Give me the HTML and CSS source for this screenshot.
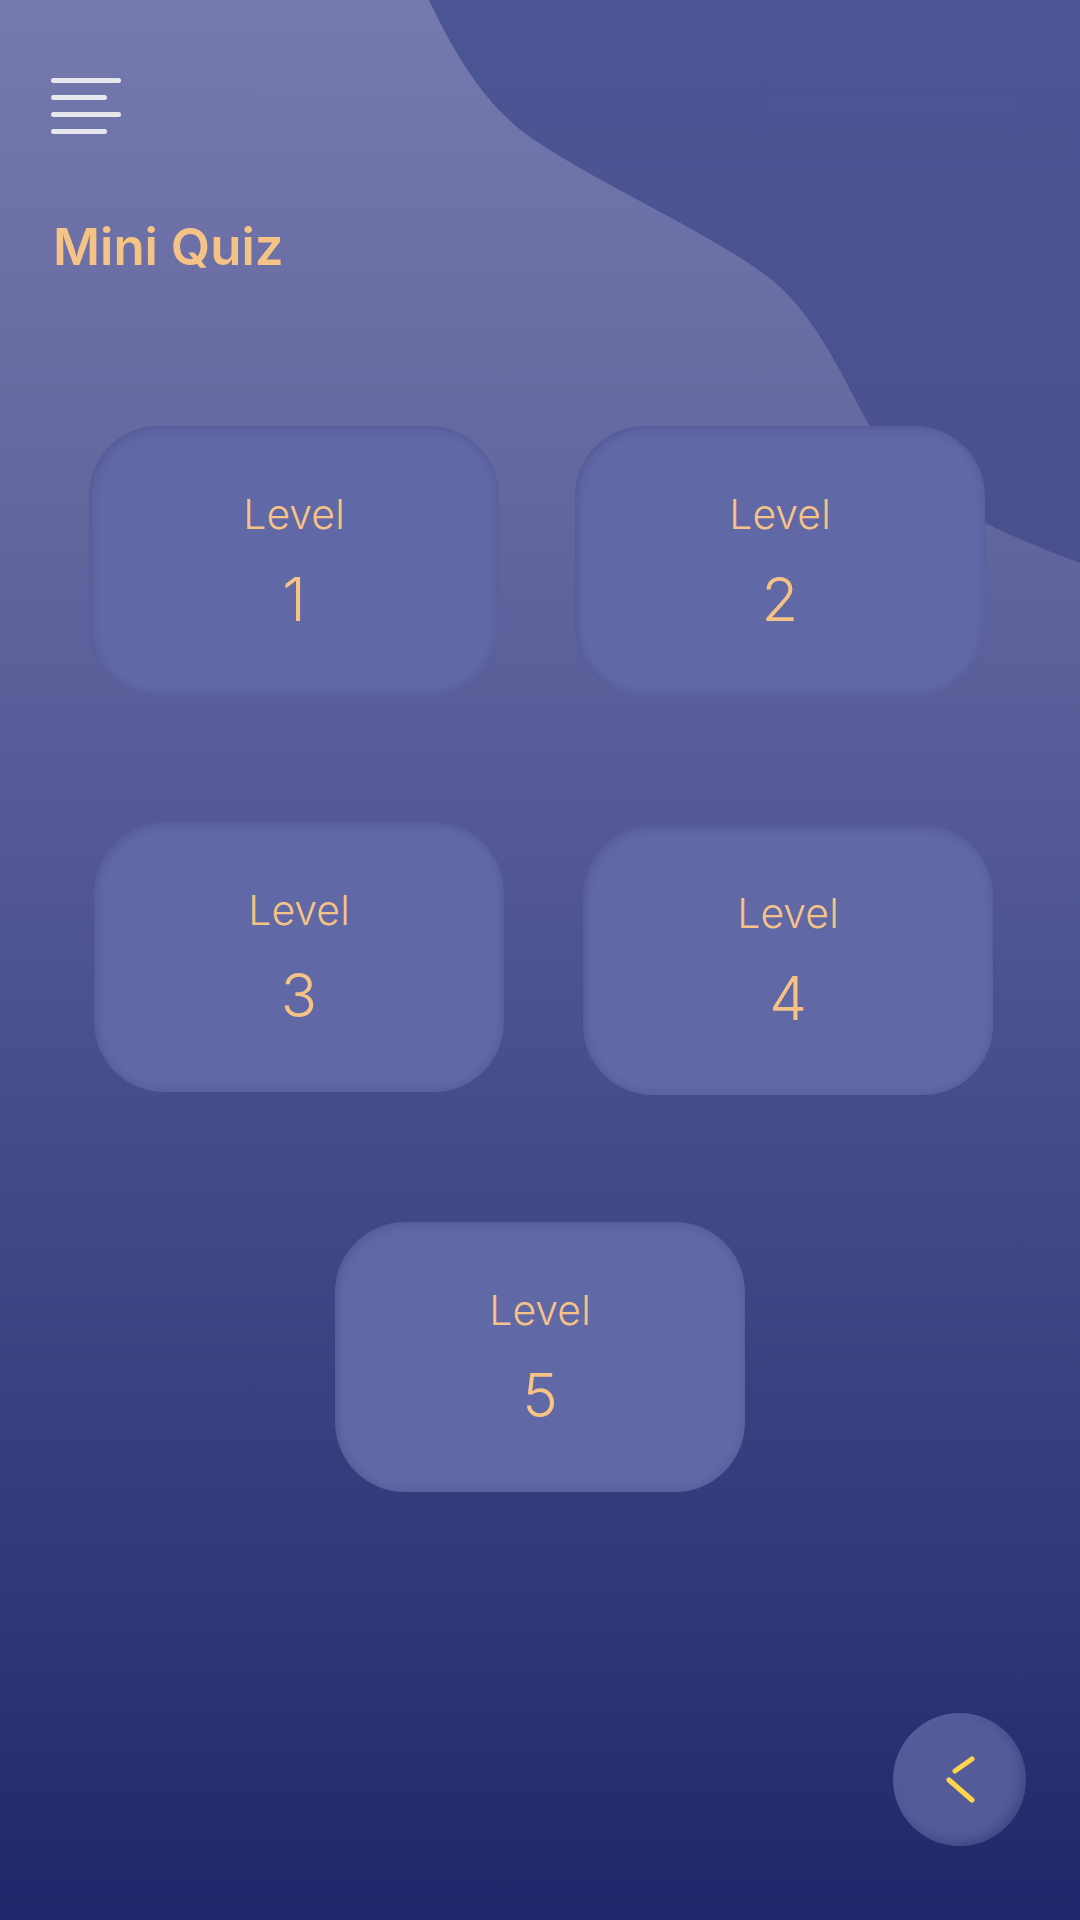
FILE: index.html
```html
<!DOCTYPE html>
<html lang="en">
<head>
<meta charset="utf-8">
<title>Mini Quiz</title>
<link rel="stylesheet" href="styles.css">
</head>
<body>
<div class="screen">
  <svg class="blob" width="1080" height="600" viewBox="0 0 1080 600" aria-hidden="true">
    <defs>
      <linearGradient id="blobFill" x1="0" y1="0" x2="0" y2="1">
        <stop offset="0" stop-color="#4c5594"/>
        <stop offset="1" stop-color="#4a508d"/>
      </linearGradient>
    </defs>
    <path d="M429 0 C455 55 485 105 530 137 C600 185 715 235 772 280 C822 322 845 385 875 435 C905 480 950 506 985 523 C1020 540 1050 552 1080 563 L1080 0 Z" fill="url(#blobFill)"/>
  </svg>

  <div class="menu" aria-label="Menu">
    <span class="menu-line"></span>
    <span class="menu-line menu-line-short"></span>
    <span class="menu-line"></span>
    <span class="menu-line menu-line-short"></span>
  </div>

  <h1 class="title">Mini Quiz</h1>

  <div class="levels">
    <div class="row row-1">
      <div class="card"><span class="card-label">Level</span><span class="card-num">1</span></div>
      <div class="card"><span class="card-label">Level</span><span class="card-num">2</span></div>
    </div>
    <div class="row row-2">
      <div class="card"><span class="card-label">Level</span><span class="card-num">3</span></div>
      <div class="card card-low"><span class="card-label">Level</span><span class="card-num">4</span></div>
    </div>
    <div class="row row-3">
      <div class="card"><span class="card-label">Level</span><span class="card-num">5</span></div>
    </div>
  </div>

  <button class="back" aria-label="Back">
    <svg width="133" height="133" viewBox="0 0 133 133">
      <line x1="62" y1="58" x2="79" y2="46" class="chev"/>
      <line x1="56" y1="67" x2="79" y2="87" class="chev"/>
    </svg>
  </button>
</div>
</body>
</html>
```

FILE: styles.css
```css
* {
  box-sizing: border-box;
}

html, body {
  margin: 0;
  padding: 0;
}

body {
  font-family: "Inter", "Noto Sans", "Liberation Sans", sans-serif;
  background: #21266a;
}

.screen {
  position: relative;
  width: 1080px;
  height: 1920px;
  overflow: hidden;
  background: linear-gradient(180deg,
    #7479ae 0%,
    #63679f 26%,
    #555a97 41.7%,
    #474c8b 57.3%,
    #363c7b 78%,
    #21266a 100%);
  display: flex;
  flex-direction: column;
}

.blob {
  position: absolute;
  top: 0;
  left: 0;
  display: block;
}

.menu {
  position: relative;
  margin: 78px 0 0 51px;
  display: flex;
  flex-direction: column;
  gap: 12px;
}

.menu-line {
  display: block;
  width: 70px;
  height: 5px;
  border-radius: 3px;
  background: #e7e7ee;
}

.menu-line-short {
  width: 56px;
}

.title {
  position: relative;
  margin: 87px 0 0 53px;
  font-size: 51px;
  line-height: 51px;
  font-weight: 600;
  color: #f6c386;
  letter-spacing: 0;
}

.levels {
  position: relative;
  margin-top: 154px;
  display: flex;
  flex-direction: column;
}

.row {
  display: flex;
  align-items: flex-start;
}

.row-1 {
  padding-left: 89px;
  gap: 76px;
}

.row-2 {
  margin-top: 126px;
  padding-left: 94px;
  gap: 79px;
}

.row-3 {
  margin-top: 127px;
  padding-left: 335px;
}

.card {
  width: 410px;
  height: 270px;
  border-radius: 70px;
  background: #6168a6;
  box-shadow:
    inset 3px 3px 9px rgba(60, 63, 120, 0.28),
    inset -2px -2px 7px rgba(60, 63, 120, 0.16);
  display: flex;
  flex-direction: column;
  align-items: center;
  padding-top: 68px;
  color: #f6c386;
}

.card-low {
  margin-top: 3px;
}

.card-label {
  font-size: 41px;
  line-height: 41px;
  font-weight: 300;
}

.card-num {
  margin-top: 34px;
  font-size: 60px;
  line-height: 60px;
  font-weight: 300;
}

.back {
  position: absolute;
  left: 893px;
  top: 1713px;
  width: 133px;
  height: 133px;
  padding: 0;
  border: none;
  border-radius: 50%;
  background: #545b99;
  box-shadow:
    inset -4px -4px 10px rgba(35, 38, 90, 0.35),
    inset 2px 2px 6px rgba(120, 125, 190, 0.15);
  display: block;
}

.back svg {
  display: block;
}

.chev {
  stroke: #fdd54b;
  stroke-width: 5;
  stroke-linecap: round;
}
```
